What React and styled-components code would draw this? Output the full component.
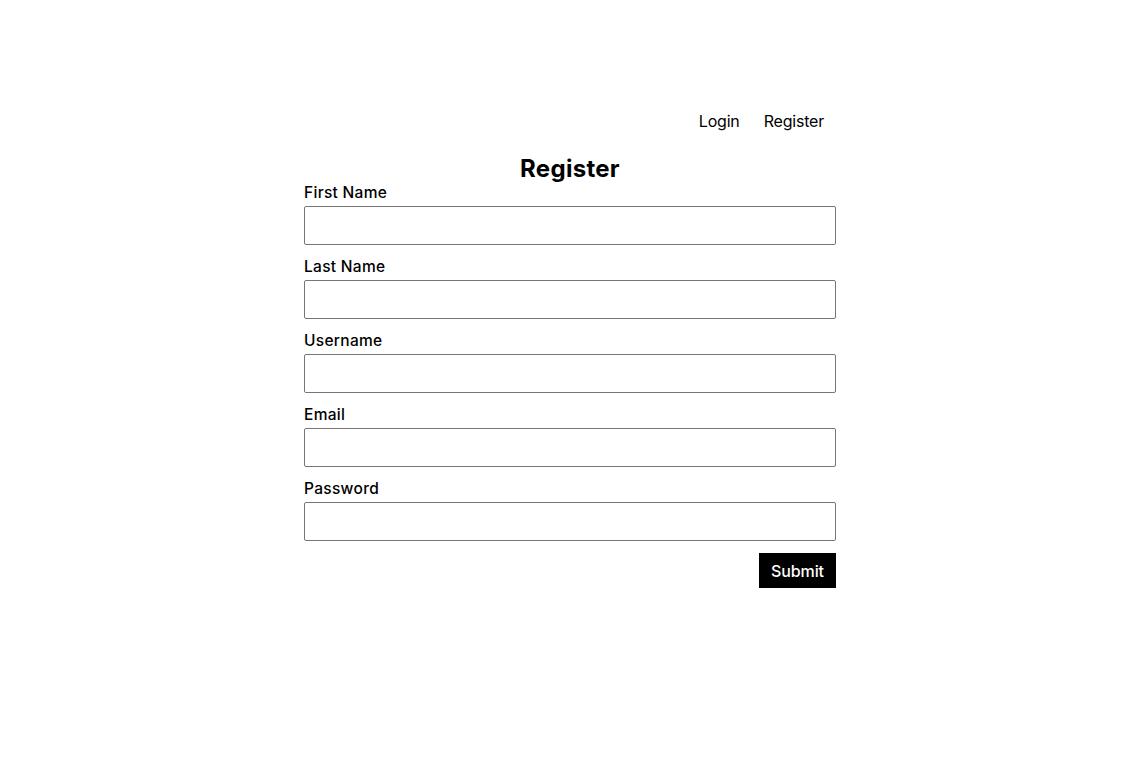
import React from "react";
import styled, { createGlobalStyle } from "styled-components";

const Global = createGlobalStyle`
  html, body { margin: 0; padding: 0; background: #fff; }
  body { font-family: Inter, "Noto Sans", sans-serif; color: #000; }
`;

const Page = styled.div`
  padding: 108px 0 0 11px;
  display: flex;
  justify-content: center;
`;

const Container = styled.div`
  width: 532px;
  display: flex;
  flex-direction: column;
`;

const Nav = styled.nav`
  display: flex;
  justify-content: flex-end;
  height: 26px;
  align-items: center;
`;

const NavLink = styled.a`
  padding: 0 12px;
  font-size: 16px;
  color: #000;
  text-decoration: none;
  letter-spacing: -0.2px;
`;

const Title = styled.h1`
  margin: 21px 0 0;
  text-align: center;
  font-size: 24px;
  font-weight: 700;
  line-height: 28px;
  letter-spacing: 0.3px;
`;

const Form = styled.form`
  display: flex;
  flex-direction: column;
`;

const Field = styled.div`
  display: flex;
  flex-direction: column;
  margin-bottom: 12px;
`;

const Label = styled.label`
  font-size: 15.5px;
  font-weight: 500;
  line-height: 18px;
  padding-top: 1px;
  margin-bottom: 4px;
  letter-spacing: 0.3px;
`;

const Input = styled.input`
  box-sizing: border-box;
  height: 39px;
  border: 1px solid #767676;
  border-radius: 2px;
  padding: 0 8px;
  font-size: 16px;
  font-family: inherit;
`;

const Actions = styled.div`
  display: flex;
  justify-content: flex-end;
`;

const Submit = styled.button`
  background: #000;
  color: #fff;
  border: none;
  height: 35px;
  width: 77px;
  font-size: 16px;
  font-family: inherit;
  font-weight: 500;
  letter-spacing: -0.1px;
  cursor: pointer;
`;

const fields = ["First Name", "Last Name", "Username", "Email", "Password"];

export default function App() {
  return (
    <>
      <Global />
      <Page>
        <Container>
          <Nav>
            <NavLink href="#">Login</NavLink>
            <NavLink href="#">Register</NavLink>
          </Nav>
          <Title>Register</Title>
          <Form onSubmit={(e) => e.preventDefault()}>
            {fields.map((f) => (
              <Field key={f}>
                <Label>{f}</Label>
                <Input type={f === "Password" ? "password" : "text"} />
              </Field>
            ))}
            <Actions>
              <Submit type="submit">Submit</Submit>
            </Actions>
          </Form>
        </Container>
      </Page>
    </>
  );
}
